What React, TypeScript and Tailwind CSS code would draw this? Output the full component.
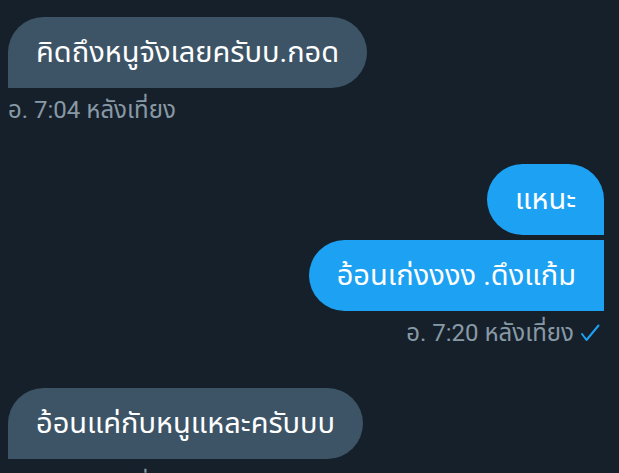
import React from "react";

const font = { fontFamily: 'Roboto, "Noto Sans", "Noto Sans Thai", sans-serif' };

function Received({ text }: { text: string }) {
  return (
    <div className="flex">
      <div className="h-[71px] px-[28px] flex items-center bg-[#3d5466] text-white text-[29px] rounded-[36px] rounded-bl-none whitespace-nowrap">
        {text}
      </div>
    </div>
  );
}

function Stamp({ time, right, check }: { time: string; right?: boolean; check?: boolean }) {
  return (
    <div className={`h-[30px] flex items-center gap-[6px] text-[24px] text-[#8899a6] whitespace-nowrap ${right ? "justify-end pr-[4px]" : ""}`}>
      <span>{time}</span>
      {check && (
        <svg width="20" height="18" viewBox="0 0 20 18" fill="none">
          <path d="M2 10 L6.5 16 L18.5 1.5" stroke="#1da1f2" strokeWidth="2" strokeLinecap="round" strokeLinejoin="round" />
        </svg>
      )}
    </div>
  );
}

export default function App() {
  return (
    <div className="w-[619px] h-[473px] overflow-hidden bg-[#16202b] pt-[17px] pl-[8px] pr-[15px]" style={font}>
      <Received text="คิดถึงหนูจังเลยครับบ.กอด" />
      <div className="mt-[7px]">
        <Stamp time="อ. 7:04 หลังเที่ยง" />
      </div>

      <div className="mt-[39px] flex flex-col items-end gap-[5px]">
        <div className="h-[71px] px-[28px] flex items-center bg-[#1da1f2] text-white text-[29px] rounded-[36px] rounded-br-none whitespace-nowrap">
          แหนะ
        </div>
        <div className="h-[71px] px-[28px] flex items-center bg-[#1da1f2] text-white text-[29px] rounded-l-[36px] whitespace-nowrap">
          อ้อนเก่งงงง .ดึงแก้ม
        </div>
      </div>
      <div className="mt-[7px]">
        <Stamp time="อ. 7:20 หลังเที่ยง" right check />
      </div>

      <div className="mt-[40px]">
        <Received text="อ้อนแค่กับหนูแหละครับบบ" />
      </div>
      <div className="mt-[11px]">
        <Stamp time="อ. 7:21 หลังเที่ยง" />
      </div>
    </div>
  );
}
